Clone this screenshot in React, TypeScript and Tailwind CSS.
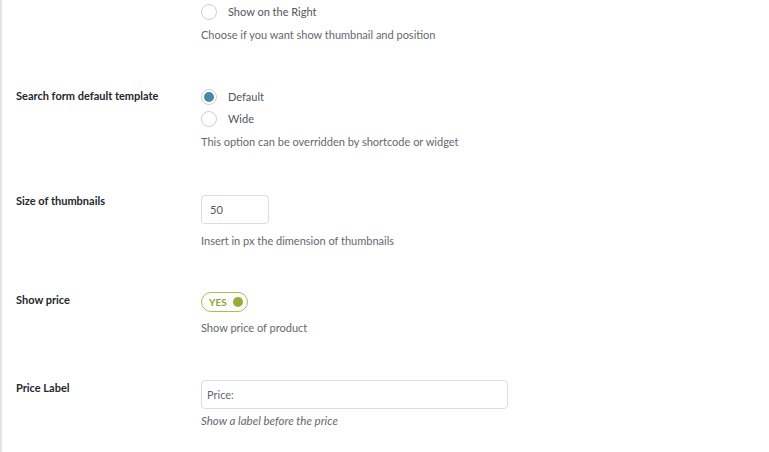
import React from "react";

function Radio({ label, checked }: { label: string; checked?: boolean }) {
  return (
    <label className="flex items-center h-[22px] text-[11px] text-[#50575e]">
      <span className="w-4 h-4 rounded-full border border-[#cfcfcf] bg-white flex items-center justify-center shrink-0">
        {checked && <span className="w-[10px] h-[10px] rounded-full bg-[#4a86a6]" />}
      </span>
      <span className="ml-[11px]">{label}</span>
    </label>
  );
}

function Desc({ children, italic }: { children: React.ReactNode; italic?: boolean }) {
  return (
    <p className={"leading-4 text-[#646970]" + (italic ? " italic text-[11.5px]" : " text-[11px]")}>{children}</p>
  );
}

export default function App() {
  return (
    <main
      className="min-h-[452px] bg-white border-l-2 border-[#e2e2e2] pl-[14px]"
      style={{ fontFamily: 'Lato, "Open Sans", sans-serif' }}
    >
      {/* Thumbnail position (cut at top) */}
      <div className="flex pt-[1px]">
        <div className="w-[185px] shrink-0" />
        <div>
          <Radio label="Show on the Right" />
          <div className="mt-1">
            <Desc>Choose if you want show thumbnail and position</Desc>
          </div>
        </div>
      </div>

      {/* Search form default template */}
      <div className="flex pt-[43px]">
        <div className="w-[185px] shrink-0 text-[11px] leading-5 font-bold text-[#23282d]">
          Search form default template
        </div>
        <div>
          <Radio label="Default" checked />
          <Radio label="Wide" />
          <div className="mt-1">
            <Desc>This option can be overridden by shortcode or widget</Desc>
          </div>
        </div>
      </div>

      {/* Size of thumbnails */}
      <div className="flex pt-[41px]">
        <div className="w-[185px] shrink-0 text-[11px] leading-5 font-bold text-[#23282d]">
          Size of thumbnails
        </div>
        <div className="pt-1">
          <input
            defaultValue="50"
            className="w-[68px] h-[29px] px-2 rounded border border-[#dcdcdc] text-[11px] text-[#50575e] outline-none"
          />
          <div className="mt-[9px]">
            <Desc>Insert in px the dimension of thumbnails</Desc>
          </div>
        </div>
      </div>

      {/* Show price */}
      <div className="flex pt-[41px]">
        <div className="w-[185px] shrink-0 text-[11px] leading-5 font-bold text-[#23282d]">
          Show price
        </div>
        <div className="pt-[2px]">
          <div className="w-[47px] h-5 rounded-full border-[1.5px] border-[#a8bd4f] flex items-center justify-between pl-[7px] pr-[4px]">
            <span className="text-[10px] font-bold text-[#8ca52c] leading-none">YES</span>
            <span className="w-[10px] h-[10px] rounded-full bg-[#94ae31]" />
          </div>
          <div className="mt-2">
            <Desc>Show price of product</Desc>
          </div>
        </div>
      </div>

      {/* Price label */}
      <div className="flex pt-[42px]">
        <div className="w-[185px] shrink-0 text-[11px] leading-5 font-bold text-[#23282d]">
          Price Label
        </div>
        <div className="pt-[2px]">
          <input
            defaultValue="Price:"
            className="w-[307px] h-[29px] px-[5px] rounded border border-[#dcdcdc] text-[11px] text-[#646970] outline-none"
          />
          <div className="mt-1">
            <Desc italic>Show a label before the price</Desc>
          </div>
        </div>
      </div>
    </main>
  );
}
